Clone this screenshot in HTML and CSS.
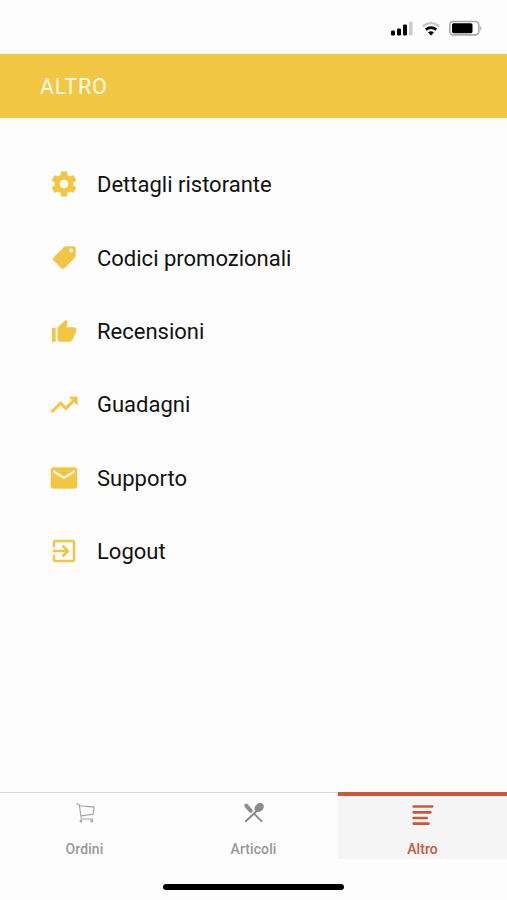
FILE: index.html
```html
<!DOCTYPE html>
<html lang="it">
<head>
<meta charset="utf-8">
<title>Altro</title>
<link rel="stylesheet" href="styles.css">
</head>
<body>
<div class="status">
  <svg width="92" height="20" viewBox="0 0 92 20">
    <rect x="1" y="10.500" width="4" height="5" rx="1.2"/>
    <rect x="7" y="8.500" width="4" height="7" rx="1.2"/>
    <rect x="13" y="4.500" width="4" height="11" rx="1.2"/>
    <rect x="19" y="1.500" width="3.6" height="14" rx="1.2" fill="#ccc"/>
    <path d="M32.8 6.2Q41 -.2 49.2 6.2" fill="none" stroke="#c8c8c8" stroke-width="2.6"/>
    <path d="M35.8 9.6Q41 5.6 46.2 9.6" fill="none" stroke="#000" stroke-width="2.7"/>
    <path d="M38 12.4Q41 10 44 12.4L41 15.4Z"/>
    <rect x="59.8" y="1.500" width="29" height="13.4" rx="3.6" fill="#fff" stroke="#aaa" stroke-width="1.6"/>
    <rect x="62" y="3.2" width="20.5" height="10" rx="1.6"/>
    <path d="M90.2 6Q92.6 8.3 90.2 10.600Z" fill="#aaa"/>
  </svg>
</div>
<header class="header">ALTRO</header>
<nav class="menu">
  <a class="item"><svg class="icon gear" viewBox="0 0 24 24"><path d="M19.43 12.98c.04-.32.07-.64.07-.98s-.03-.66-.07-.98l2.11-1.65c.19-.15.24-.42.12-.64l-2-3.46c-.12-.22-.39-.3-.61-.22l-2.49 1c-.52-.4-1.08-.73-1.69-.98l-.38-2.65A.49.49 0 0 0 14 2h-4a.49.49 0 0 0-.49.42l-.38 2.65c-.61.25-1.17.59-1.69.98l-2.49-1a.49.49 0 0 0-.61.22l-2 3.46c-.13.22-.07.49.12.64l2.11 1.65c-.04.32-.07.65-.07.98s.03.66.07.98l-2.11 1.65c-.19.15-.24.42-.12.64l2 3.46c.12.22.39.3.61.22l2.49-1c.52.4 1.08.73 1.69.98l.38 2.65c.03.24.24.42.49.42h4c.25 0 .46-.18.49-.42l.38-2.65c.61-.25 1.17-.59 1.69-.98l2.49 1c.23.09.49 0 .61-.22l2-3.46a.5.5 0 0 0-.12-.64zM12 15.5a3.5 3.5 0 1 1 0-7 3.5 3.5 0 0 1 0 7z"/></svg><span>Dettagli ristorante</span></a>
  <a class="item"><svg class="icon" viewBox="0 0 24 24"><path fill-rule="evenodd" d="M19.8 2.5h-6.3c-.5 0-1 .2-1.4.6l-8.500 8.500c-.8.8-.8 1.500 0 2.300l6.300 6.300c.8.8 1.500.8 2.300 0l8.500-8.500c.4-.4.6-.8.6-1.400V4c0-.8-.7-1.500-1.500-1.500zM17.600 7.600a1.600 1.600 0 1 1 0-3.200 1.600 1.600 0 0 1 0 3.200z"/></svg><span>Codici promozionali</span></a>
  <a class="item"><svg class="icon" viewBox="0 0 24 24"><path d="M2.300 20.500h3V9.600h-3zM21.700 10.800c0-1-.9-1.800-1.900-1.800H14l.9-3.700V5c0-.4-.2-.8-.5-1.100l-1-1-6 5.700c-.4.4-.6.8-.6 1.300v8.800c0 1 .8 1.800 1.800 1.800h8.200c.7 0 1.400-.5 1.700-1.100l3-6.200c.1-.2.2-.5.2-.7z"/></svg><span>Recensioni</span></a>
  <a class="item"><svg class="icon trend" viewBox="0 0 24 24"><path stroke="#f2c543" stroke-width=".4" d="m16 6 2.290 2.290-4.880 4.880-4-4L2 16.590 3.410 18l6-6 4 4 6.300-6.290L22 12V6z"/></svg><span>Guadagni</span></a>
  <a class="item"><svg class="icon wide" viewBox="0 0 24 24"><path d="M20 4H4c-1.100 0-2 .9-2 2v12c0 1.100.9 2 2 2h16c1.100 0 2-.9 2-2V6c0-1.100-.9-2-2-2zm0 3.800-8 5-8-5V6l8 5 8-5z"/></svg><span>Supporto</span></a>
  <a class="item"><svg class="icon" viewBox="0 0 24 24"><path d="m10.090 15.590 1.410 1.410 5-5-5-5-1.410 1.410L12.670 11H3v2h9.670zM19 3H5a2 2 0 0 0-2 2v4h2V5h14v14H5v-4H3v4a2 2 0 0 0 2 2h14c1.100 0 2-.9 2-2V5c0-1.100-.9-2-2-2z"/></svg><span>Logout</span></a>
</nav>
<footer class="tabs">
  <a class="tab"><svg class="tabicon" viewBox="0 0 24 24" fill="none" stroke="#a2a2a2" stroke-width="1.1"><path d="M3.300 2.500l2.900 1.200 2.200 14.300h11.600M6.400 4.700l14.800 1.400-1.200 7.100-12.200 1.700"/><circle cx="8" cy="20.200" r=".8"/><circle cx="18.800" cy="20.200" r=".8"/></svg><span>Ordini</span></a>
  <a class="tab"><svg class="tabicon" viewBox="0 0 24 24"><g fill="none" stroke="#8b8b8b" stroke-linecap="round"><path stroke-width="2" d="M3.800 20.200 16 8.800M12 12.600l7.500 7.500"/><path stroke-width="4" d="M4.300 4.700l4.400 5"/></g><ellipse cx="17.200" cy="6.500" rx="5" ry="4" transform="rotate(-40 17.200 6.500)" fill="#8b8b8b"/></svg><span>Articoli</span></a>
  <a class="tab active"><svg class="tabicon" viewBox="0 0 24 24" fill="none" stroke="#c9583d" stroke-width="2.700" stroke-linecap="round"><path d="M2.700 3.500h18.500M2.700 9.300h16.700M2.700 15h13M2.700 20.700h14.800"/></svg><span>Altro</span></a>
</footer>
<div class="home"></div>
</body>
</html>
```
FILE: styles.css
```css
* { box-sizing: border-box; }
body {
  margin: 0;
  height: 900px;
  display: flex;
  flex-direction: column;
  background: #fdfdfd;
  font-family: Roboto, sans-serif;
  overflow: hidden;
}
svg { display: block; flex: none; }
.status {
  height: 54px;
  padding: 20px 25px 0 0;
  display: flex;
  justify-content: flex-end;
}
.header {
  height: 64px;
  padding-left: 40px;
  background: #f2c744;
  color: #fff9e5;
  font-size: 21.5px;
  line-height: 65px;
  letter-spacing: .8px;
}
.menu {
  flex: 1;
  padding: 30px 0 0 49px;
}
.item {
  height: 73.35px;
  display: flex;
  align-items: center;
  font-size: 22px;
  color: #111;
}
.item span { margin-left: 18px; }
.icon {
  width: 30px;
  height: 30px;
  fill: #f2c543;
}
.gear { margin-bottom: 2px; }
.trend { width: 32px; height: 32px; margin: 0 -1px; }
.wide { width: 32px; height: 32px; margin: 0 -1px; }
.tabs {
  height: 67px;
  display: grid;
  grid-template-columns: repeat(3, 1fr);
}
.tab {
  border-top: 1px solid #d9d9d9;
  padding-top: 8px;
  display: flex;
  flex-direction: column;
  align-items: center;
  font-size: 14px;
  font-weight: 500;
  line-height: 20px;
  letter-spacing: .1px;
  color: #999;
}
.tabicon { width: 24px; height: 24px; }
.tab span { margin-top: 14px; }
.active {
  border-top: 4px solid #c9583d;
  padding-top: 7px;
  background: #f5f5f5;
  color: #c9583d;
}
.active span { margin-top: 12px; }
.home {
  width: 181px;
  height: 6px;
  margin: 25px auto 10px;
  border-radius: 3px;
  background: #000;
}
```
